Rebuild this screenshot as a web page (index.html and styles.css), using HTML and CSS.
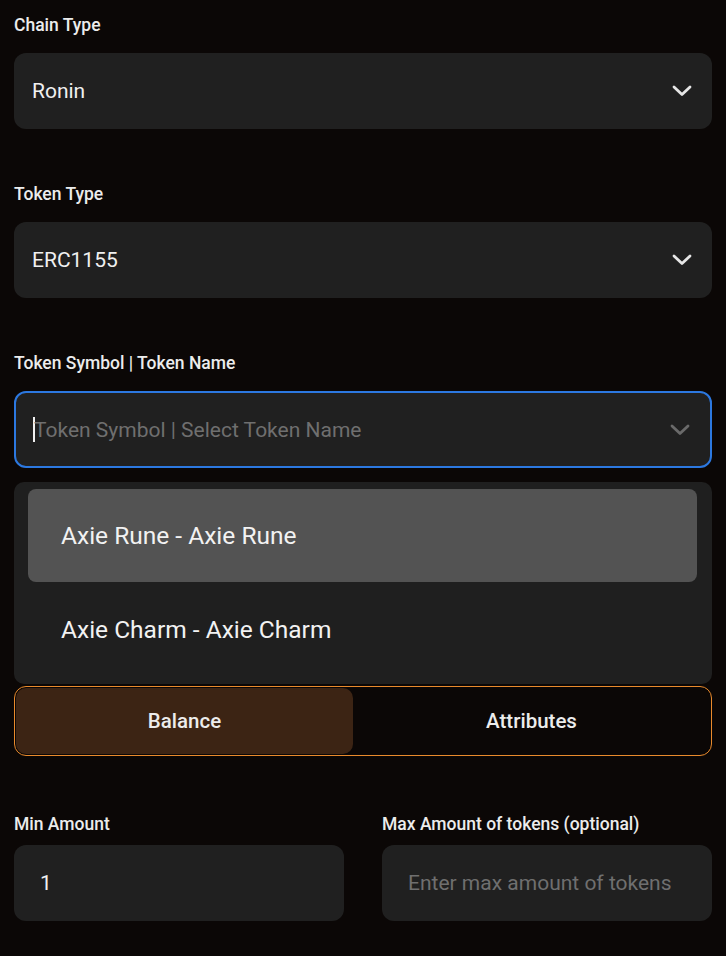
FILE: index.html
```html
<!DOCTYPE html>
<html>
<head>
<meta charset="utf-8">
<link rel="stylesheet" href="styles.css">
</head>
<body>
<div class="form">
  <div class="field">
    <div class="label">Chain Type</div>
    <div class="select">
      <span class="value">Ronin</span>
      <svg class="chev" width="20" height="12" viewBox="0 0 20 12"><path d="M2 2 L10 9.5 L18 2" fill="none" stroke="#e6e6e6" stroke-width="2.8" stroke-linecap="round" stroke-linejoin="round"/></svg>
    </div>
  </div>
  <div class="field">
    <div class="label">Token Type</div>
    <div class="select">
      <span class="value">ERC1155</span>
      <svg class="chev" width="20" height="12" viewBox="0 0 20 12"><path d="M2 2 L10 9.5 L18 2" fill="none" stroke="#e6e6e6" stroke-width="2.8" stroke-linecap="round" stroke-linejoin="round"/></svg>
    </div>
  </div>
  <div class="field last">
    <div class="label">Token Symbol | Token Name</div>
    <div class="select focused">
      <span class="caret"></span>
      <span class="placeholder">Token Symbol | Select Token Name</span>
      <svg class="chev" width="20" height="12" viewBox="0 0 20 12"><path d="M2 2 L10 9.5 L18 2" fill="none" stroke="#6a6a6a" stroke-width="2.8" stroke-linecap="round" stroke-linejoin="round"/></svg>
    </div>
  </div>
  <div class="menu">
    <div class="option active">Axie Rune - Axie Rune</div>
    <div class="option">Axie Charm - Axie Charm</div>
  </div>
  <div class="toggle">
    <div class="tab selected">Balance</div>
    <div class="tab">Attributes</div>
  </div>
  <div class="amounts">
    <div class="col">
      <div class="label small-gap">Min Amount</div>
      <div class="input"><span class="num">1</span></div>
    </div>
    <div class="col">
      <div class="label small-gap">Max Amount of tokens (optional)</div>
      <div class="input"><span class="placeholder">Enter max amount of tokens</span></div>
    </div>
  </div>
</div>
</body>
</html>
```
FILE: styles.css
```css
* { box-sizing: border-box; }
html, body {
  margin: 0;
  background: #0b0706;
  font-family: Roboto, "Open Sans", "Liberation Sans", sans-serif;
  color: #eeeeee;
}
.form {
  padding: 14px 14px 0 14px;
}
.field {
  margin-bottom: 54px;
}
.field.last { margin-bottom: 14px; }
.label {
  font-size: 17.5px;
  font-weight: 500;
  line-height: 22px;
  color: #ececec;
  margin-bottom: 17px;
}
.label.small-gap { margin-bottom: 10px; }
.select {
  height: 76px;
  background: #202020;
  border-radius: 12px;
  display: flex;
  align-items: center;
  padding: 0 18px;
}
.select.focused {
  border: 2px solid #2c78e0;
  height: 77px;
  padding-left: 17px;
}
.value {
  font-size: 21px;
  color: #f0f0f0;
  flex: 1;
}
.placeholder {
  font-size: 21px;
  color: #6f6f6f;
  flex: 1;
}
.caret {
  width: 2px;
  height: 25px;
  background: #f0f0f0;
  margin-right: -1px;
}
.chev {
  margin-right: 2px;
}
.menu {
  background: #1f1f1f;
  border-radius: 10px;
  padding: 7px 15px 8px 14px;
}
.option {
  height: 94px;
  display: flex;
  align-items: center;
  padding-left: 33px;
  font-size: 24.5px;
  color: #f2f2f2;
  border-radius: 8px;
}
.option.active {
  background: #535353;
  height: 93px;
}
.toggle {
  margin-top: 2px;
  height: 70px;
  border: 1px solid #e98a2c;
  border-radius: 12px;
  display: flex;
  padding: 1px;
}
.tab {
  flex: 1;
  display: flex;
  align-items: center;
  justify-content: center;
  font-size: 20.5px;
  font-weight: 500;
  color: #ececec;
  border-radius: 10px;
}
.tab.selected {
  flex: 0 0 337px;
  background: #3c2414;
}
.amounts {
  margin-top: 57px;
  display: grid;
  grid-template-columns: 330px 330px;
  column-gap: 38px;
}
.input {
  height: 76px;
  background: #202020;
  border-radius: 12px;
  display: flex;
  align-items: center;
  padding: 0 26px;
}
.num {
  font-size: 21px;
  color: #f0f0f0;
}
```
